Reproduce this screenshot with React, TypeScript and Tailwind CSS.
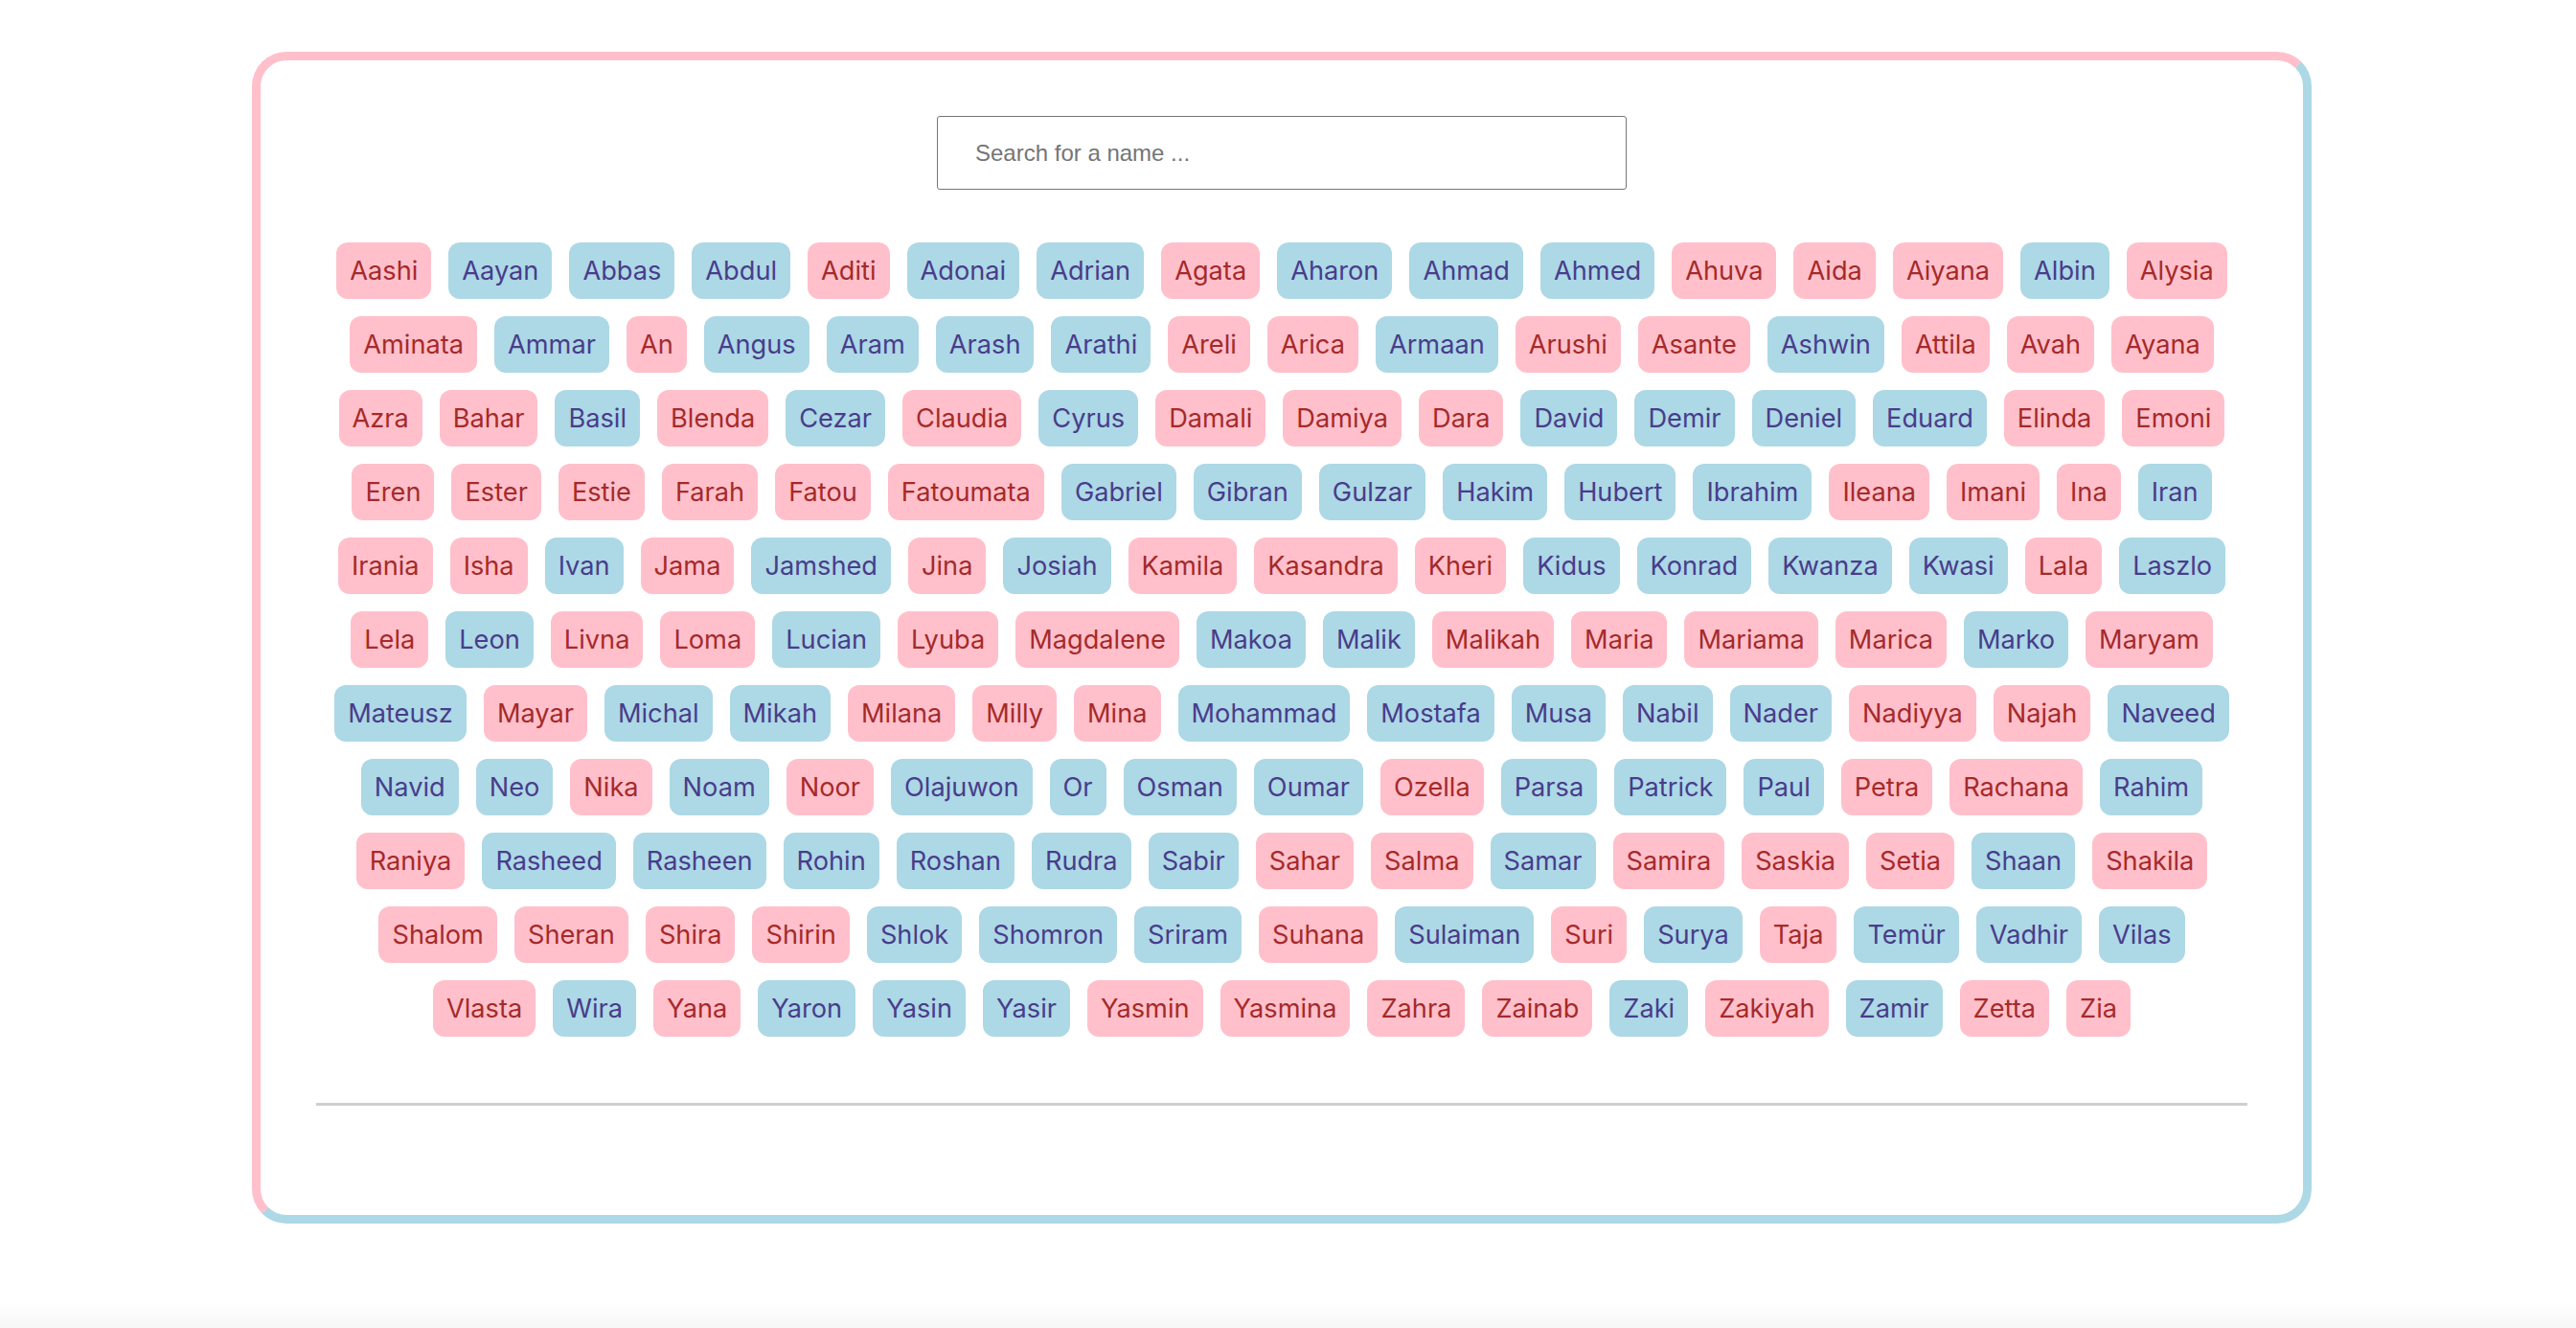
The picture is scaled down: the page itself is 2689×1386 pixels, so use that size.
import React from "react";

type Tone = "p" | "b";

const rows: [string, Tone][][] = [
  [["Aashi","p"],["Aayan","b"],["Abbas","b"],["Abdul","b"],["Aditi","p"],["Adonai","b"],["Adrian","b"],["Agata","p"],["Aharon","b"],["Ahmad","b"],["Ahmed","b"],["Ahuva","p"],["Aida","p"],["Aiyana","p"],["Albin","b"],["Alysia","p"]],
  [["Aminata","p"],["Ammar","b"],["An","p"],["Angus","b"],["Aram","b"],["Arash","b"],["Arathi","b"],["Areli","p"],["Arica","p"],["Armaan","b"],["Arushi","p"],["Asante","p"],["Ashwin","b"],["Attila","p"],["Avah","p"],["Ayana","p"]],
  [["Azra","p"],["Bahar","p"],["Basil","b"],["Blenda","p"],["Cezar","b"],["Claudia","p"],["Cyrus","b"],["Damali","p"],["Damiya","p"],["Dara","p"],["David","b"],["Demir","b"],["Deniel","b"],["Eduard","b"],["Elinda","p"],["Emoni","p"]],
  [["Eren","p"],["Ester","p"],["Estie","p"],["Farah","p"],["Fatou","p"],["Fatoumata","p"],["Gabriel","b"],["Gibran","b"],["Gulzar","b"],["Hakim","b"],["Hubert","b"],["Ibrahim","b"],["Ileana","p"],["Imani","p"],["Ina","p"],["Iran","b"]],
  [["Irania","p"],["Isha","p"],["Ivan","b"],["Jama","p"],["Jamshed","b"],["Jina","p"],["Josiah","b"],["Kamila","p"],["Kasandra","p"],["Kheri","p"],["Kidus","b"],["Konrad","b"],["Kwanza","b"],["Kwasi","b"],["Lala","p"],["Laszlo","b"]],
  [["Lela","p"],["Leon","b"],["Livna","p"],["Loma","p"],["Lucian","b"],["Lyuba","p"],["Magdalene","p"],["Makoa","b"],["Malik","b"],["Malikah","p"],["Maria","p"],["Mariama","p"],["Marica","p"],["Marko","b"],["Maryam","p"]],
  [["Mateusz","b"],["Mayar","p"],["Michal","b"],["Mikah","b"],["Milana","p"],["Milly","p"],["Mina","p"],["Mohammad","b"],["Mostafa","b"],["Musa","b"],["Nabil","b"],["Nader","b"],["Nadiyya","p"],["Najah","p"],["Naveed","b"]],
  [["Navid","b"],["Neo","b"],["Nika","p"],["Noam","b"],["Noor","p"],["Olajuwon","b"],["Or","b"],["Osman","b"],["Oumar","b"],["Ozella","p"],["Parsa","b"],["Patrick","b"],["Paul","b"],["Petra","p"],["Rachana","p"],["Rahim","b"]],
  [["Raniya","p"],["Rasheed","b"],["Rasheen","b"],["Rohin","b"],["Roshan","b"],["Rudra","b"],["Sabir","b"],["Sahar","p"],["Salma","p"],["Samar","b"],["Samira","p"],["Saskia","p"],["Setia","p"],["Shaan","b"],["Shakila","p"]],
  [["Shalom","p"],["Sheran","p"],["Shira","p"],["Shirin","p"],["Shlok","b"],["Shomron","b"],["Sriram","b"],["Suhana","p"],["Sulaiman","b"],["Suri","p"],["Surya","b"],["Taja","p"],["Temür","b"],["Vadhir","b"],["Vilas","b"]],
  [["Vlasta","p"],["Wira","b"],["Yana","p"],["Yaron","b"],["Yasin","b"],["Yasir","b"],["Yasmin","p"],["Yasmina","p"],["Zahra","p"],["Zainab","p"],["Zaki","b"],["Zakiyah","p"],["Zamir","b"],["Zetta","p"],["Zia","p"]],
];

function NameTag({ name, tone }: { name: string; tone: Tone }) {
  return (
    <span
      className={
        tone === "p"
          ? "h-[59px] px-[14px] flex items-center rounded-[12px] bg-[#ffc0cb] text-[#a52a2a] text-[27.2px] leading-none whitespace-nowrap"
          : "h-[59px] px-[14px] flex items-center rounded-[12px] bg-[#add8e6] text-[#483d8b] text-[27.2px] leading-none whitespace-nowrap"
      }
    >
      {name}
    </span>
  );
}

export default function App() {
  return (
    <div className="h-[1386px] bg-white flex flex-col font-['Inter','Noto_Sans',sans-serif]">
      <div className="ml-[263px] mt-[54px] w-[2150px] h-[1223px] box-border border-[9px] border-t-[#ffc0cb] border-l-[#ffc0cb] border-r-[#add8e6] border-b-[#add8e6] rounded-[36px] flex flex-col items-center pt-[58px]">
        <input
          type="text"
          placeholder="Search for a name ..."
          className="w-[720px] h-[77px] box-border border border-[#767676] rounded-[3px] pl-[39px] text-[24px] font-['Liberation_Sans',Arial,sans-serif] placeholder:text-[#757575] outline-none"
        />

        <div className="mt-[55px] w-[2016px] flex flex-col gap-[18px]">
          {rows.map((row, i) => (
            <div key={i} className="flex justify-center gap-[18px]">
              {row.map(([name, tone]) => (
                <NameTag key={name} name={name} tone={tone} />
              ))}
            </div>
          ))}
        </div>

        <div className="mt-[69px] w-[2016px] h-[3px] bg-[#cfcfcf]" />
      </div>
      <div className="mt-auto h-[26px] bg-linear-to-b from-white to-[#f6f6f6]" />
    </div>
  );
}
